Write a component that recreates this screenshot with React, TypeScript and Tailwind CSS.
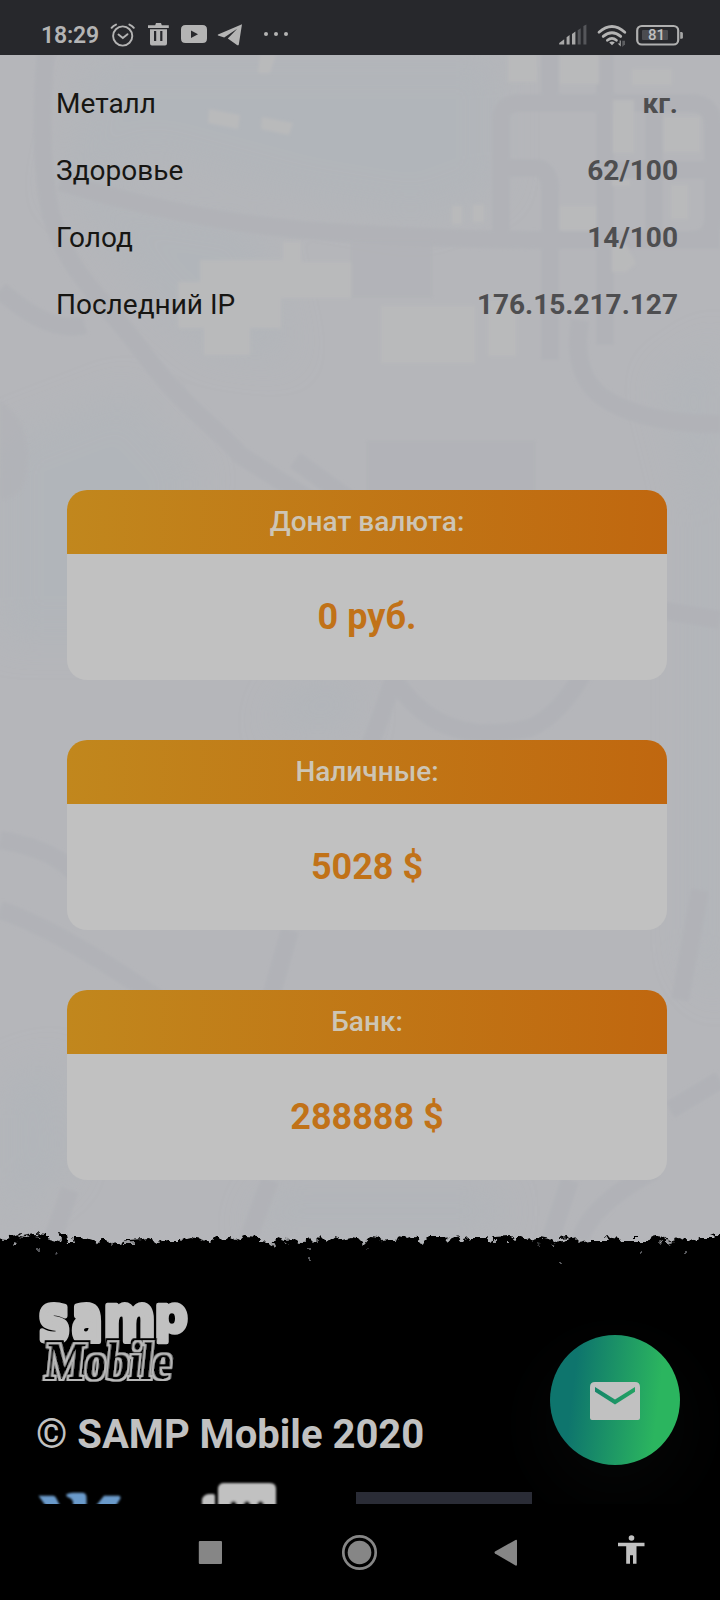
import React from "react";

const rows = [
  { label: "Металл", value: "кг." },
  { label: "Здоровье", value: "62/100" },
  { label: "Голод", value: "14/100" },
  { label: "Последний IP", value: "176.15.217.127" },
];

const balances = [
  { title: "Донат валюта:", value: "0 руб." },
  { title: "Наличные:", value: "5028 $" },
  { title: "Банк:", value: "288888 $" },
];

function StatusBar() {
  return (
    <header className="flex h-[55px] shrink-0 items-start justify-between bg-[#27282c] pr-[37px] pl-[41px] text-[#b4b4b4]">
      <div className="flex items-start">
        <span className="w-[59px] pt-[22px] text-[23px] leading-[28px] font-semibold tracking-[-0.2px]">18:29</span>
        <svg className="h-[55px] w-[190px]" viewBox="100 0 190 55" fill="#b4b4b4">
          <g fill="none" stroke="#b4b4b4" strokeLinecap="round">
            <circle cx="122.7" cy="36" r="9.6" strokeWidth="1.9" />
            <path d="M118.5 34.5 122.8 38 127.5 34.2" strokeWidth="1.9" />
            <path d="M111.6 27.8Q113.3 25.6 116 24.6M133.8 27.8Q132.1 25.6 129.4 24.6" strokeWidth="2" />
          </g>
          <path d="M148 25.2h7.2l.8-2.2h5l.8 2.2h7v2.9H148z" />
          <path fillRule="evenodd" d="M150 29.3h17v14.2q0 1.9-1.9 1.9h-13.2q-1.900 0-1.900-1.900zM154 31v10h2.2V31zm6.2 0v10h2.2V31z" />
          <path fillRule="evenodd" d="M185.5 25h17q4.500 0 4.500 4.500v9q0 4.500-4.500 4.500h-17q-4.500 0-4.500-4.500v-9q0-4.500 4.500-4.500zm5.500 5.400v7.600l7-3.800z" />
          <path d="M242 24.2 218 34.6q-.6.4 0 .8l6.2 2.2L237.2 28.8 227.8 38.6 237.3 45.2q1.2.5 1.5-.8z" />
          <circle cx="266" cy="34" r="2" />
          <circle cx="276" cy="34" r="2" />
          <circle cx="286" cy="34" r="2" />
        </svg>
      </div>
      <svg className="h-[55px] w-[125px] shrink-0" viewBox="558 0 125 55" fontFamily="Roboto">
        <g fill="#a8a8a8">
          <path d="M559.2 44.6v-1.6l5-3.8v5.4zM566.6 44.6v-7.4l3-2.2v9.6zM572 44.6V34l3.400-2.400v13z" />
          <path d="M577.7 44.6V30.2l3-2v16.4zM583.4 44.6V26l3-1.4v20z" fill="#55565a" />
        </g>
        <g fill="none" stroke="#b4b4b4" strokeWidth="2.8" strokeLinecap="round">
          <path d="M599 32.2Q612 20.8 624.8 32.2" />
          <path d="M603.2 36.4Q612 29 620.7 36.4" />
          <path d="M607.4 40.3Q612 36.4 616.4 40.3" />
        </g>
        <path d="m612 45.3-2.8-2.7q2.8-2 5.6 0z" fill="#b4b4b4" />
        <path d="M620.7 40.5v6l-3-3h2v-3z" fill="#b4b4b4" />
        <path d="M622.3 47v-6.3h2.7v3.6z" fill="#5c5d60" />
        <rect x="637.2" y="26" width="41" height="18.5" rx="4.6" fill="none" stroke="#b0b0b0" strokeWidth="2.2" />
        <path d="M680.2 32h1.4q1.3 0 1.3 1.5v3.7q0 1.5-1.3 1.5h-1.4z" fill="#a6a6a6" />
        <rect x="642" y="30" width="26" height="10" rx="1" fill="#4b4c50" />
        <text x="656.500" y="40.300" textAnchor="middle" fontSize="15" fontWeight="500" fill="#c0c0c0">81</text>
      </svg>
    </header>
  );
}

function MapBackground() {
  return (
    <svg className="absolute inset-0 h-full w-full" viewBox="0 55 720 1193" preserveAspectRatio="none">
      <defs>
        <filter id="soft" x="-5%" y="-5%" width="110%" height="110%">
          <feGaussianBlur stdDeviation="1.8" />
        </filter>
        <filter id="haze" x="-40%" y="-40%" width="180%" height="180%">
          <feGaussianBlur stdDeviation="18" />
        </filter>
      </defs>
      <rect y="55" width="720" height="1193" fill="#b5b6ba" />
      <g fill="#b0b5ba" opacity=".6" filter="url(#haze)">
        <path d="M90 55H500V190L420 220 300 200 150 160 60 200z" />
        <path d="M70 190 260 220 290 360 210 350 150 300z" />
        <path d="M0 440 130 390 200 470 160 640 0 640z" />
        <path d="M660 380 720 340V1000L690 960 690 500z" />
        <path d="M0 1080 60 1060 70 1170 0 1230zM270 1190H500V1232H250z" />
        <path d="M290 690 350 670 360 730H270z" />
      </g>
      <g fill="none" stroke="#b1b2b7" strokeWidth="18" filter="url(#soft)">
        <path d="M46 50Q37 150 51 215C68 275 105 300 145 355S220 430 240 455L310 500" />
        <path d="M60 182Q200 224 330 232T540 240H720" />
        <path d="M501 240V120Q501 103 520 103H690Q715 103 713 130V220Q712 240 690 240" />
        <path d="M550 50V103M605 50V345M654 103V240M605 170H712M500 168H535Q550 168 550 190V360M580 320Q570 380 610 402T720 424" />
        <path d="M395 675Q380 720 370 745M395 680Q440 750 530 728 560 715 585 670" />
        <path d="M0 290Q50 335 85 325M0 840Q60 850 80 880M0 910Q60 930 160 1000M290 930 270 1000M700 890 680 1000M270 1180 248 1240M70 1190 52 1240M570 1180 550 1240M655 1170Q590 1205 580 1240M660 610 720 620M670 1110 720 1080M295 460 350 500" />
      </g>
      <g fill="#b1b2b7" opacity=".6" filter="url(#soft)">
        <path d="M350 240h83v58h-83zM366 440h170v55H366zM0 400Q30 420 28 460 28 500 0 500z" />
      </g>
      <g fill="#b9babb" filter="url(#soft)">
        <path d="M260 55h16l-6 18h-12zM508 55h29v27h-29zM560 55h39v29h-39zM632 69h40v16h-40zM209 109l31 6-2 14-30-6zM262 117l31 6-4 12-28-6zM613 100h21v53h-21zM664 117h36v35h-36zM671 185h17v34h-17zM560 206h36v24h-36zM612 180h18v6h-18zM612 245h14l10 18-10 9h-14z" />
        <path d="M452 206h10v18h-10zM473 205h11v17h-11zM200 260h83v-18h18v20h50v36h-70v30h-31v27h-46v-27h-26v-46h22zM381 306h94v57h-94zM488 300h28v56h-28z" />
      </g>
    </svg>
  );
}

function BalanceCard({ title, value }: { title: string; value: string }) {
  return (
    <section className="h-[190px] overflow-hidden rounded-[20px] bg-[#c1c1c1]">
      <h2 className="flex h-[64px] items-center justify-center bg-[linear-gradient(92deg,#c1871d,#c0670f)] text-[28px] font-medium text-[#cdc5b5]">
        {title}
      </h2>
      <p className="flex h-[126px] items-center justify-center text-[36px] font-bold text-[#c17218]">{value}</p>
    </section>
  );
}

function TornEdge() {
  return (
    <svg className="absolute -top-[10px] left-0 h-[50px] w-full" viewBox="0 1230 720 50">
      <defs>
        <filter id="edge" x="-2%" y="-20%" width="104%" height="140%">
          <feTurbulence type="fractalNoise" baseFrequency=".16 .2" numOctaves="2" seed="7" result="noise" />
          <feDisplacementMap in="SourceGraphic" in2="noise" scale="7" xChannelSelector="R" yChannelSelector="G" />
          <feGaussianBlur stdDeviation=".7" />
        </filter>
      </defs>
      <g filter="url(#edge)">
        <path d="M-15 1239 9 1240 10 1236 20 1234 19 1237 28 1238 35 1234 47 1235 47 1239 58 1242 62 1240 59 1234 66 1234 68 1243 75 1243 73 1237 82 1237 95 1241 98 1243 102 1239 108 1241 112 1244 120 1243 128 1240 142 1239 149 1238 157 1243 168 1240 180 1240 192 1237 201 1239 210 1242 215 1237 220 1237 224 1241 230 1237 236 1240 244 1236 259 1237 258 1242 269 1243 272 1246 277 1237 285 1240 293 1239 300 1243 309 1238 314 1243 321 1236 327 1242 334 1237 342 1240 350 1238 358 1239 363 1244 370 1236 378 1237 384 1242 387 1239 396 1243 399 1237 408 1239 417 1236 422 1244 429 1237 446 1237 449 1241 458 1237 461 1241 470 1238 486 1238 492 1242 494 1237 510 1236 515 1240 521 1236 528 1240 539 1237 549 1239 553 1243 564 1242 573 1237 579 1243 590 1241 609 1241 606 1236 619 1238 621 1242 646 1242 656 1236 665 1237 670 1241 678 1238 690 1241 700 1238 712 1238 715 1235 735 1236V1290H-15z" />
        <path d="M23 1235l11-2 3 3-8 1zM559 1237l8-1 2 2-9 1zM633 1236h4v2h-4zM710 1235l5-2v3zM455 1236l5-1v2z" />
        <g fill="#9b9ca0">
          <path d="M12 1241l5 1-2 2zM36 1237l4-1-1 2zM110 1243l5-1-3 3zM122 1242l12-1-1 3-11 0zM271 1243h5l-2 4zM284 1242l4 1-2 1zM299 1241l7-1-2 2zM362 1242l3 1-2 2zM420 1242l4 1-2 3zM494 1240h2v2h-2zM506 1240h3v2h-3zM550 1244l5 1-2 1zM657 1240l6 1-2 3zM667 1240l6 3-6 2z" />
        </g>
        <g fill="#55565a">
          <path d="M36 1248h3v2h-3zM53 1253l4 0-2 2zM306 1247h4v2h-4zM308 1258h2v3h-2zM365 1248l4 0-2 2zM537 1243l4 1-2 1zM561 1262h2v2h-2zM640 1251h2v2h-2zM684 1250h2v3h-2z" />
        </g>
      </g>
    </svg>
  );
}

function Logo() {
  return (
    <svg className="block h-[90px] w-[160px]" viewBox="36 1298 160 90" aria-label="samp Mobile">
      <defs>
        <filter id="logoSoft">
          <feGaussianBlur stdDeviation=".55" />
        </filter>
        <filter id="ring" x="-10%" y="-20%" width="120%" height="140%">
          <feMorphology in="SourceAlpha" operator="dilate" radius="4" result="wide" />
          <feFlood floodColor="#000" />
          <feComposite in2="wide" operator="in" result="halo" />
          <feMorphology in="SourceAlpha" operator="dilate" radius="2" result="mid" />
          <feFlood floodColor="#b9b9b9" />
          <feComposite in2="mid" operator="in" result="outline" />
          <feMerge>
            <feMergeNode in="halo" />
            <feMergeNode in="outline" />
            <feMergeNode in="SourceGraphic" />
          </feMerge>
          <feGaussianBlur stdDeviation=".5" />
        </filter>
      </defs>
      <g filter="url(#logoSoft)" fill="#c1c1c1" stroke="#c1c1c1" strokeWidth="5.500" strokeLinejoin="round" fontFamily="DejaVu Sans" fontWeight="700" fontSize="58">
        <text transform="translate(39 1341) scale(.88 1.1)">s</text>
        <text transform="translate(72 1341) scale(.78 1.1)">a</text>
        <text transform="translate(103.500 1341) scale(.86 1.1)">m</text>
        <text transform="translate(154.500 1331.500) scale(.8 .86)">p</text>
      </g>
      <text
        transform="translate(44 1379) skewX(-6)"
        textLength="126"
        lengthAdjust="spacingAndGlyphs"
        fontFamily="Liberation Serif"
        fontWeight="700"
        fontSize="52"
        fill="#000"
        filter="url(#ring)"
      >
        Mobile
      </text>
    </svg>
  );
}

function Footer() {
  return (
    <footer className="relative -mt-[8px] h-[264px] shrink-0">
      <TornEdge />
      <div className="relative flex h-full flex-col overflow-hidden pt-[58px] pl-[36px]">
        <Logo />
        <p className="mt-[23px] text-[40px] leading-[48px] font-bold whitespace-nowrap text-[#c1c1c1]">© SAMP Mobile 2020</p>
        <svg className="mt-[21px] h-[24px] w-[500px] shrink-0" viewBox="36 1480 500 24">
          <defs>
            <filter id="iconSoft">
              <feGaussianBlur stdDeviation=".8" />
            </filter>
          </defs>
          <g fill="#6a9aca" filter="url(#iconSoft)">
            <path d="M38.500 1495.700H53q2 0 3 2l5 10H47zM66 1494.500q3-1.700 7-1.700h9q4.500 0 4.500 5v9H73v-5q-1-3.500-6-5zM104 1495.700H119q2 .5 1.300 3L115 1507H95z" />
          </g>
          <g filter="url(#iconSoft)">
            <path d="M202 1507v-8q2-5 8-5h3q2 0 2 2v11z" fill="#c1c1c1" />
            <path d="M218 1507v-19q1-5 6-5h46q6 0 6 6v18z" fill="#c1c1c1" />
            <path d="M230 1503.500q3.500-5 7 0v3h-7zM243.500 1503.500q3.500-5 7 0v3h-7zM257 1503.500q3.500-5 7 0v3h-7z" fill="#111" />
          </g>
          <rect x="356" y="1492" width="176" height="14" fill="#2a2c36" />
        </svg>
      </div>
      <button className="absolute top-[95px] left-[550px] flex size-[130px] items-center justify-center rounded-full bg-[linear-gradient(97deg,#0e756d_20%,#2bb55f_80%)] shadow-[0_24px_70px_12px_rgba(190,210,220,0.028)]">
        <svg className="mt-[2px] h-[38px] w-[50px]" viewBox="0 0 50 38">
          <path fillRule="evenodd" d="M5 0H45Q50 0 50 5V36Q50 38 48 38H2Q0 38 0 36V5Q0 0 5 0ZM5 5V9.800L25 22.500 45 9.800V5L25 17.500Z" fill="#c1c1c1" />
        </svg>
      </button>
    </footer>
  );
}

function NavigationBar() {
  return (
    <nav className="relative h-[96px] shrink-0 bg-black">
      <svg className="block h-full w-full" viewBox="0 1504 720 96">
        <g fill="#868686">
          <rect x="198.800" y="1541" width="23.200" height="23" rx="1" />
          <circle cx="359.500" cy="1552.500" r="11.800" />
          <circle cx="359.500" cy="1552.500" r="16.200" fill="none" stroke="#868686" strokeWidth="2.700" />
          <path d="M495 1551.500 515.500 1540q1.500-.6 1.500 1v23.500q0 1.600-1.500 1L495 1553.500q-1-1 0-2z" />
        </g>
        <g fill="#c1c1c1">
          <circle cx="631.500" cy="1538" r="2.800" />
          <path d="M618 1542.700H644.500V1546.300H636.500V1563.700H633V1555.300H630V1563.700H626.200V1546.300H618z" />
        </g>
      </svg>
    </nav>
  );
}

export default function App() {
  return (
    <div className="flex h-[1600px] w-[720px] flex-col overflow-hidden bg-black font-[Roboto,sans-serif]">
      <StatusBar />
      <main className="relative h-[1193px] shrink-0">
        <MapBackground />
        <div className="relative flex flex-col">
          <dl className="flex flex-col pt-[15px] pr-[42px] pl-[56px]">
            {rows.map((row) => (
              <div key={row.label} className="flex h-[67px] items-center justify-between text-[28px]">
                <dt className="text-[#171613]">{row.label}</dt>
                <dd className="font-bold text-[#4e4e50]">{row.value}</dd>
              </div>
            ))}
          </dl>
          <div className="mt-[152px] flex flex-col gap-[60px] pr-[53px] pl-[67px]">
            {balances.map((item) => (
              <BalanceCard key={item.title} title={item.title} value={item.value} />
            ))}
          </div>
        </div>
      </main>
      <Footer />
      <NavigationBar />
    </div>
  );
}
